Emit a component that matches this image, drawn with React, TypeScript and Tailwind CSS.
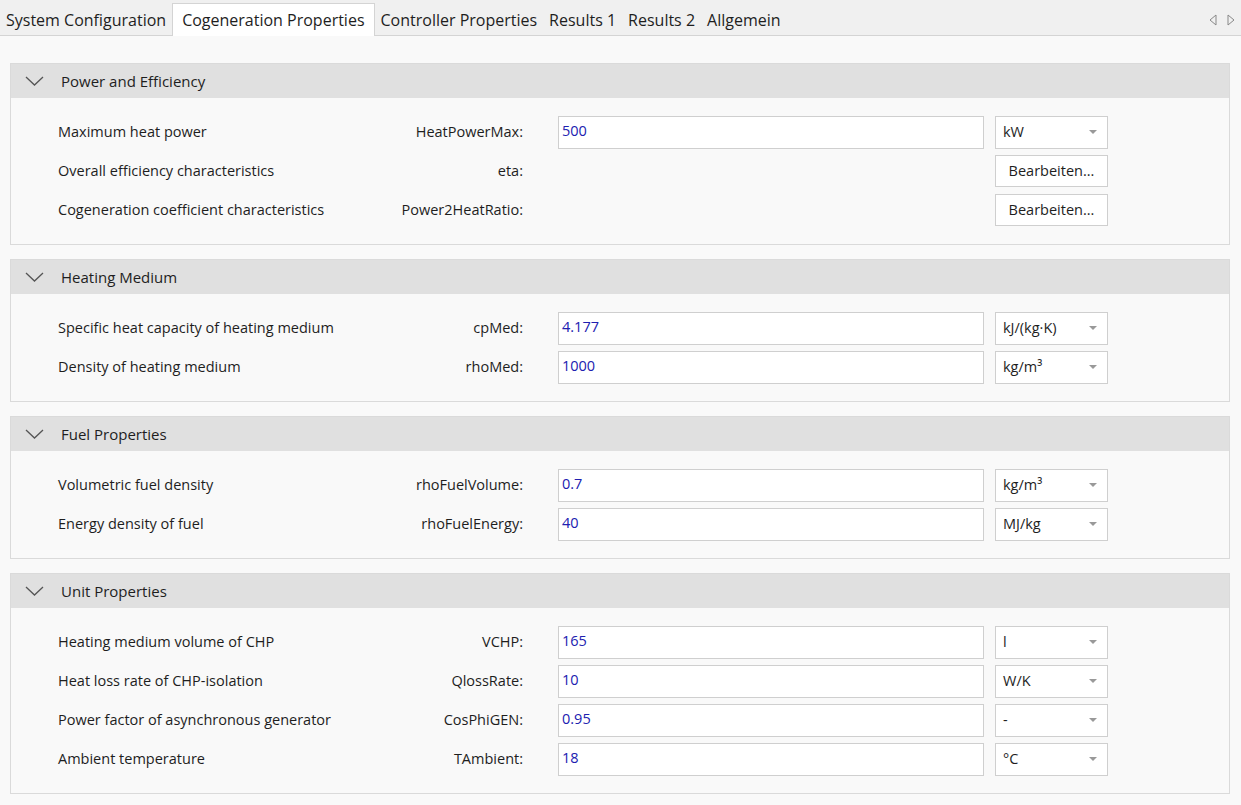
import React from "react";

type Row = { label: string; name: string; value?: string; unit?: string; edit?: boolean };
type Section = { title: string; rows: Row[] };

const sections: Section[] = [
  {
    title: "Power and Efficiency",
    rows: [
      { label: "Maximum heat power", name: "HeatPowerMax:", value: "500", unit: "kW" },
      { label: "Overall efficiency characteristics", name: "eta:", edit: true },
      { label: "Cogeneration coefficient characteristics", name: "Power2HeatRatio:", edit: true },
    ],
  },
  {
    title: "Heating Medium",
    rows: [
      { label: "Specific heat capacity of heating medium", name: "cpMed:", value: "4.177", unit: "kJ/(kg·K)" },
      { label: "Density of heating medium", name: "rhoMed:", value: "1000", unit: "kg/m³" },
    ],
  },
  {
    title: "Fuel Properties",
    rows: [
      { label: "Volumetric fuel density", name: "rhoFuelVolume:", value: "0.7", unit: "kg/m³" },
      { label: "Energy density of fuel", name: "rhoFuelEnergy:", value: "40", unit: "MJ/kg" },
    ],
  },
  {
    title: "Unit Properties",
    rows: [
      { label: "Heating medium volume of CHP", name: "VCHP:", value: "165", unit: "l" },
      { label: "Heat loss rate of CHP-isolation", name: "QlossRate:", value: "10", unit: "W/K" },
      { label: "Power factor of asynchronous generator", name: "CosPhiGEN:", value: "0.95", unit: "-" },
      { label: "Ambient temperature", name: "TAmbient:", value: "18", unit: "°C" },
    ],
  },
];

const tabs = ["System Configuration", "Cogeneration Properties", "Controller Properties", "Results 1", "Results 2", "Allgemein"];

export default function App() {
  return (
    <div className="h-[805px] w-[1241px] overflow-hidden bg-[#f9f9f9] text-[#1e1e1e]" style={{ fontFamily: '"Open Sans", "Noto Sans", sans-serif' }}>
      <div className="flex h-[36px] items-end border-b border-[#d4d4d4] bg-[#f0f0f0]">
        {tabs.map((t, i) => (
          <div
            key={t}
            className={`flex items-center whitespace-nowrap text-[16px] ${i === 1 ? "-mb-[1px] h-[33px] border border-b-0 border-[#d4d4d4] bg-white px-[9px]" : "h-[31px] px-[6px]"}`}
          >
            {t}
          </div>
        ))}
        <div className="ml-auto flex h-[31px] items-center gap-[10px] pr-[6px]">
          <svg width="8" height="12" viewBox="0 0 8 12"><path d="M7 1 L1 6 L7 11 Z" fill="none" stroke="#888" /></svg>
          <svg width="8" height="12" viewBox="0 0 8 12"><path d="M1 1 L7 6 L1 11 Z" fill="none" stroke="#888" /></svg>
        </div>
      </div>
      <div className="flex flex-col gap-[14px] pl-[10px] pr-[11px] pt-[27px]">
        {sections.map((s) => (
          <div key={s.title} className="border border-[#dadada] bg-[#f9f9f9]">
            <div className="flex h-[34px] items-center bg-[#e0e0e0] text-[15px]">
              <svg className="ml-[14px] mr-[17px]" width="19" height="10" viewBox="0 0 19 10">
                <path d="M1 1 L9.5 9 L18 1" fill="none" stroke="#555" strokeWidth="1.3" />
              </svg>
              {s.title}
            </div>
            <div className="flex flex-col gap-[7px] py-[18px]">
              {s.rows.map((r) => (
                <div key={r.label} className="flex h-[32px] items-center whitespace-nowrap text-[14.5px]">
                  <div className="w-[300px] pl-[47px]">{r.label}</div>
                  <div className="w-[212px] text-right">{r.name}</div>
                  <div className="ml-[35px] w-[426px]">
                    {r.value !== undefined && (
                      <div className="h-[33px] border border-[#cfcfcf] bg-white px-[3px] pt-[3px] text-[#2020b0]">{r.value}</div>
                    )}
                  </div>
                  <div className="ml-[11px] w-[113px]">
                    {r.edit ? (
                      <div className="flex h-[32px] items-center justify-center border border-[#cfcfcf] bg-white">Bearbeiten...</div>
                    ) : (
                      <div className="flex h-[33px] items-center justify-between border border-[#cfcfcf] bg-white pl-[7px] pr-[10px]">
                        <span>{r.unit}</span>
                        <svg width="8" height="5" viewBox="0 0 8 5"><path d="M0 0 L8 0 L4 4 Z" fill="#999" /></svg>
                      </div>
                    )}
                  </div>
                </div>
              ))}
            </div>
          </div>
        ))}
      </div>
    </div>
  );
}
